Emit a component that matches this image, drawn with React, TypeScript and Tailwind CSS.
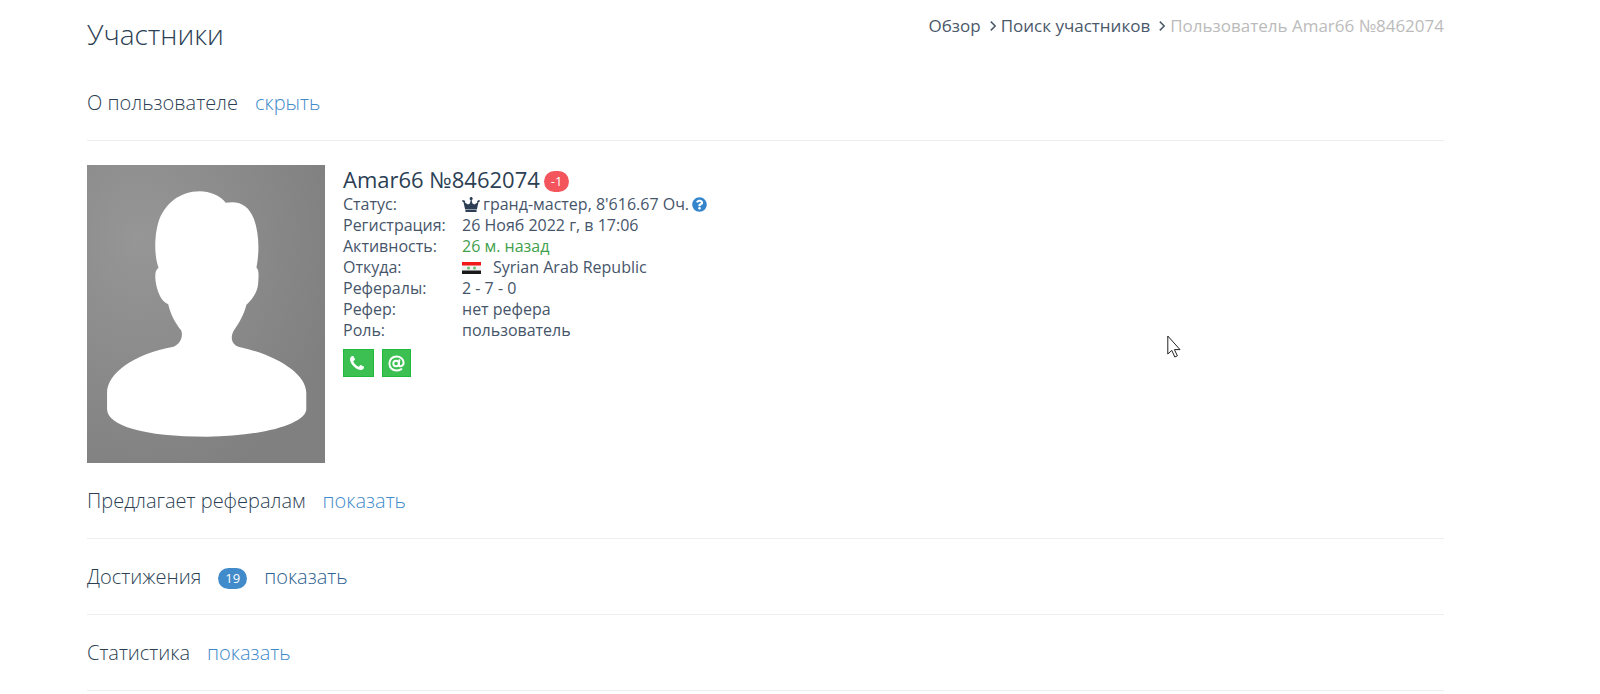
import type { ReactNode } from 'react';
import { FaQuestionCircle } from 'react-icons/fa';

const CrownIcon = () => (
  <svg viewBox="0 0 54 46" className="h-[15px] w-[18px]" fill="#2c3f54" aria-hidden="true">
    <path d="M10 46h34v-6H10zM9 38L4 16 0 14v-4h6l3 3v5l9 5 6-4 2-9-3-3V3l3-3h3l3 3v4l-3 3 2 9 6 4 9-5v-5l3-3h5v4l-4 2-5 22z" />
  </svg>
);

const SyriaFlag = () => (
  <svg viewBox="0 0 19 12" className="mr-3 h-3 w-[19px]" aria-hidden="true">
    <rect width="19" height="4" fill="#f01818" />
    <rect y="3.500" width="19" height="5" fill="#f1f1f1" />
    <rect y="8.500" width="19" height="3.500" fill="#1a1a1a" />
    <circle cx="6.500" cy="6" r="1.500" fill="#6cc070" />
    <circle cx="12.500" cy="6" r="1.500" fill="#6cc070" />
  </svg>
);

const PhoneIcon = () => (
  <svg viewBox="0 0 1408 1408" className="h-[14px] w-[14px]" fill="currentColor" aria-hidden="true">
    <path d="M1408 1112q0 27-10 70.500t-21 68.500q-21 50-122 106-94 51-186 51-27 0-53-3.500t-57.500-12.500-47-14.500-55.500-20.500-49-18q-98-35-175-83-127-79-264-216t-216-264q-48-77-83-175-3-9-18-49t-20.500-55.500-14.500-47-12.500-57.500-3.500-53q0-92 51-186 56-101 106-122 25-11 68.500-21t70.500-10q14 0 21 3 18 6 53 76 11 19 30 54t35 63.500 31 53.500q3 4 17.500 25t21.500 35.500 7 28.500q0 20-28.500 50t-62 55-62 53-28.500 46q0 9 5 22.500t8.500 20.500 14 24 11.500 19q76 137 174 235t235 174q2 1 19 11.500t24 14 20.500 8.500 22.500 5q18 0 46-28.500t53-62 55-62 50-28.500q14 0 28.500 7t35.500 21.500 25 17.500q25 15 53.500 31t63.500 35 54 30q70 35 76 53 3 7 3 21z" />
  </svg>
);

const AtIcon = () => (
  <svg viewBox="0 0 24 24" className="h-[17px] w-[17px]" fill="none" stroke="currentColor" strokeWidth="2.800" strokeLinecap="round" aria-hidden="true">
    <circle cx="11.500" cy="12" r="4" />
    <path d="M16 7.500l-1 6.500c0 3 7 2.500 7-3C22 5.500 17.500 2 12 2 6 2 2 6.500 2 12s4 10 10 10c3 0 5-1 7-2" />
  </svg>
);

const Avatar = () => (
  <svg viewBox="21 14 712 893" className="h-[298px] w-[238px] shrink-0" preserveAspectRatio="none" role="img" aria-label="Amar66">
    <defs>
      <radialGradient id="avatar-bg" cx="0.22" cy="0.25" r="0.85">
        <stop offset="0" stopColor="#969696" />
        <stop offset="1" stopColor="#808080" />
      </radialGradient>
    </defs>
    <rect x="21" y="14" width="712" height="893" fill="url(#avatar-bg)" />
    <path
      fill="#ffffff"
      d="M358 93C388 93 418 105 436 127C480 120 505 137 520 175C535 215 538 270 528 321C537 330 534 350 533 370C531 395 515 417 498 433C490 465 476 487 459 512C448 535 456 555 480 560C590 585 677 640 677 697V745C677 790 540 828 379 828C190 828 81 795 81 745V697C81 640 160 580 280 559C300 550 309 530 303 510C285 487 270 460 264 431C245 425 230 395 226 360C224 340 226 328 235 322C222 285 222 230 234 187C252 130 300 93 358 93Z"
    />
  </svg>
);

const Cursor = () => (
  <svg viewBox="0 0 14 23" className="pointer-events-none absolute left-[1167px] top-[335px] h-[23px] w-[14px]" aria-hidden="true">
    <path d="M.8 1v18l4-3.600 3 6.600 2.600-1.200-3-6.200h5.600z" fill="#ffffff" stroke="#222222" strokeWidth="1" />
  </svg>
);

const Chevron = () => (
  <svg viewBox="0 0 6 10" className="mr-[5px] ml-[9px] h-[10px] w-[6px]" fill="none" stroke="#4a5866" strokeWidth="1.500" aria-hidden="true">
    <path d="M.8.600L5.200 5 .8 9.400" />
  </svg>
);

function Section({ title, action, count, linkClass = 'text-[#428bca]' }: { title: string; action: string; count?: number; linkClass?: string }) {
  return (
    <div className="flex items-center gap-[17px] border-b border-[#eeeeee] pt-6 pb-[23px] text-[20px] leading-7 font-light">
      <h2>{title}</h2>
      {count !== undefined && (
        <span className="mt-[3px] rounded-full bg-[#428bca] px-[7px] text-[13px] leading-[21px] font-normal text-white">{count}</span>
      )}
      <a href="#" className={linkClass}>{action}</a>
    </div>
  );
}

function Row({ label, children }: { label: string; children: ReactNode }) {
  return (
    <div className="flex">
      <dt className="w-[119px] shrink-0">{label}</dt>
      <dd className="flex items-center">{children}</dd>
    </div>
  );
}

export default function App() {
  return (
    <div className="relative bg-white pr-[156px] pl-[87px] font-['Open_Sans','Noto_Sans',sans-serif] text-[#2c3f54]">
      <header className="flex items-start justify-between pt-[14px] pb-[11px]">
        <h1 className="text-[28px] leading-10 font-light">Участники</h1>
        <nav className="flex items-center text-[17px] leading-6 text-[#4a586a]">
          <a href="#">Обзор</a>
          <Chevron />
          <a href="#">Поиск участников</a>
          <Chevron />
          <span className="text-[#bbbbbb]">Пользователь Amar66 №8462074</span>
        </nav>
      </header>

      <Section title="О пользователе" action="скрыть" />
      <div className="mt-6 flex gap-[18px]">
        <Avatar />
        <div>
          <div className="flex items-center gap-1">
            <h3 className="text-[22px] leading-[29px]">Amar66 №8462074</h3>
            <span className="mt-1 rounded-full bg-[#f4545c] px-[7px] text-[13px] leading-[21px] text-white">-1</span>
          </div>
          <dl className="text-[16px] leading-[21px] text-[#46556a]">
            <Row label="Статус:">
              <CrownIcon />
              <span className="mx-[3px]">гранд-мастер, 8'616.67 Оч.</span>
              <FaQuestionCircle className="h-[15px] w-[15px] text-[#3585cc]" />
            </Row>
            <Row label="Регистрация:">26 Нояб 2022 г, в 17:06</Row>
            <Row label="Активность:"><span className="text-[#3fa14c]">26 м. назад</span></Row>
            <Row label="Откуда:"><SyriaFlag />Syrian Arab Republic</Row>
            <Row label="Рефералы:">2 - 7 - 0</Row>
            <Row label="Рефер:">нет рефера</Row>
            <Row label="Роль:">пользователь</Row>
          </dl>
          <div className="mt-2 flex gap-2 text-white">
            <button aria-label="Телефон" className="flex h-7 w-[31px] items-center justify-center border border-[#1fbb3c] bg-[#3cc051] pr-1">
              <PhoneIcon />
            </button>
            <button aria-label="Почта" className="flex h-7 w-[29px] items-center justify-center border border-[#1fbb3c] bg-[#3cc051]">
              <AtIcon />
            </button>
          </div>
        </div>
      </div>

      <Section title="Предлагает рефералам" action="показать" />
      <Section title="Достижения" action="показать" count={19} linkClass="text-[#2f6292]" />
      <Section title="Статистика" action="показать" />
      <Cursor />
    </div>
  );
}
